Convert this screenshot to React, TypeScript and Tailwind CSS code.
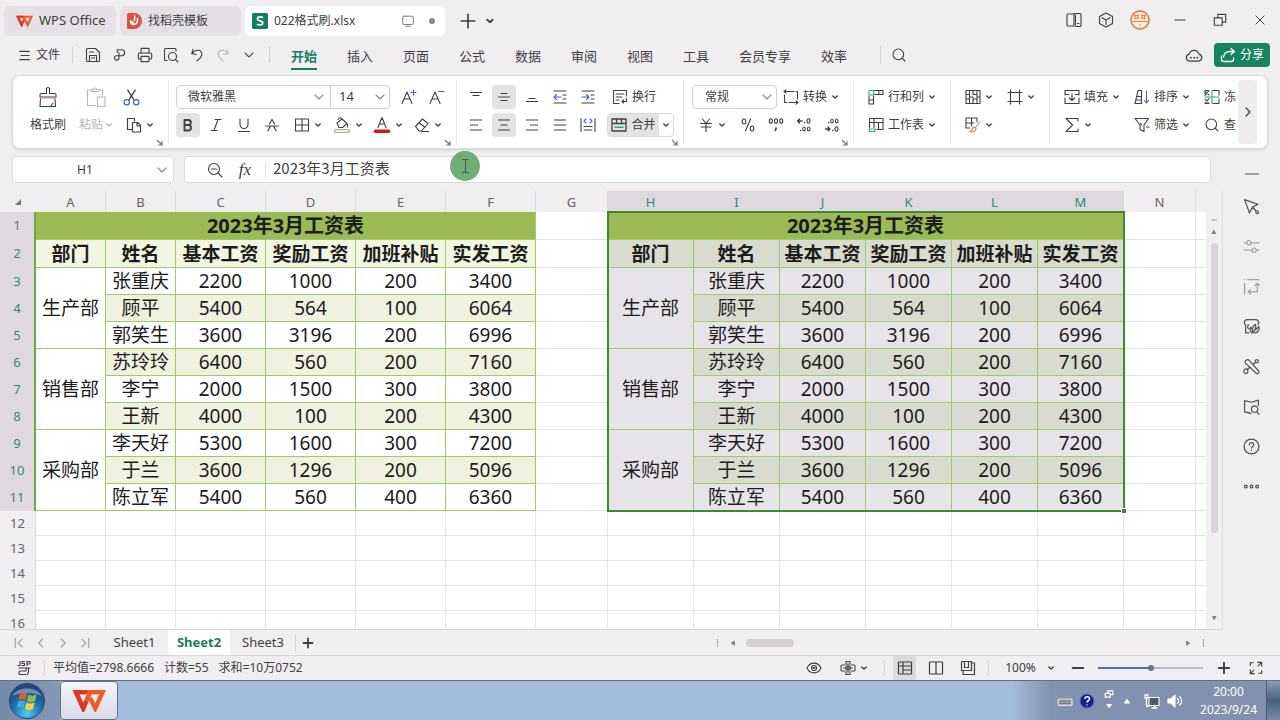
import type { ReactNode } from "react";
import { Printer, Search, X } from "lucide-react";

type Person = { name: string; base: number; bonus: number; extra: number; total: number };

const departments: { name: string; people: Person[] }[] = [
  {
    name: "生产部",
    people: [
      { name: "张重庆", base: 2200, bonus: 1000, extra: 200, total: 3400 },
      { name: "顾平", base: 5400, bonus: 564, extra: 100, total: 6064 },
      { name: "郭笑生", base: 3600, bonus: 3196, extra: 200, total: 6996 },
    ],
  },
  {
    name: "销售部",
    people: [
      { name: "苏玲玲", base: 6400, bonus: 560, extra: 200, total: 7160 },
      { name: "李宁", base: 2000, bonus: 1500, extra: 300, total: 3800 },
      { name: "王新", base: 4000, bonus: 100, extra: 200, total: 4300 },
    ],
  },
  {
    name: "采购部",
    people: [
      { name: "李天好", base: 5300, bonus: 1600, extra: 300, total: 7200 },
      { name: "于兰", base: 3600, bonus: 1296, extra: 200, total: 5096 },
      { name: "陈立军", base: 5400, bonus: 560, extra: 400, total: 6360 },
    ],
  },
];

const headings = ["部门", "姓名", "基本工资", "奖励工资", "加班补贴", "实发工资"];
const title = "2023年3月工资表";

const columns = [
  { id: "A", w: "w-[70px]" },
  { id: "B", w: "w-[70px]" },
  { id: "C", w: "w-[90px]" },
  { id: "D", w: "w-[90px]" },
  { id: "E", w: "w-[90px]" },
  { id: "F", w: "w-[90px]" },
  { id: "G", w: "w-[72px]" },
  { id: "H", w: "w-[86px]" },
  { id: "I", w: "w-[86px]" },
  { id: "J", w: "w-[86px]" },
  { id: "K", w: "w-[86px]" },
  { id: "L", w: "w-[86px]" },
  { id: "M", w: "w-[86px]" },
  { id: "N", w: "w-[72px]" },
];

const menus = ["开始", "插入", "页面", "公式", "数据", "审阅", "视图", "工具", "会员专享", "效率"];

/* ---------- icons ---------- */

const Icon = ({
  children,
  className = "size-4",
  box = "0 0 16 16",
}: {
  children: ReactNode;
  className?: string;
  box?: string;
}) => (
  <svg
    viewBox={box}
    className={`shrink-0 ${className}`}
    fill="none"
    stroke="currentColor"
    strokeWidth="1.1"
    strokeLinecap="round"
    strokeLinejoin="round"
    aria-hidden="true"
  >
    {children}
  </svg>
);

const Chevron = ({ className = "size-2" }: { className?: string }) => (
  <Icon box="0 0 8 8" className={className}>
    <path d="M1.8 3l2.2 2 2.2-2" strokeWidth="1.4" />
  </Icon>
);

const WideChevron = ({ className = "text-[#888]" }: { className?: string }) => (
  <Icon box="0 0 10 10" className={`size-2.5 ${className}`}>
    <path d="M1 3l4 4 4-4" strokeWidth="1.1" />
  </Icon>
);

const WpsLogo = ({ className }: { className: string }) => (
  <svg viewBox="0 0 32 22" className={className} fill="none" strokeWidth="4.2" aria-hidden="true">
    <path d="M15 3H3.500l7 15.500L17 3h12l-7 15.500-5-10" stroke="#ee5a2a" />
    <path d="M14 3H3.500l7 15.500 3-7" stroke="#da3a25" />
  </svg>
);

const Lines = ({ d }: { d: string }) => (
  <Icon>
    <path d={d} strokeWidth="1.2" strokeLinecap="butt" />
  </Icon>
);

/* ---------- ribbon pieces ---------- */

const Tool = ({
  label,
  children,
  active = false,
}: {
  label: string;
  children: ReactNode;
  active?: boolean;
}) => (
  <div className="flex w-7 shrink-0 justify-center">
    <button
      type="button"
      aria-label={label}
      className={`flex size-6 items-center justify-center rounded ${active ? "bg-[#e4e2e4]" : ""}`}
    >
      {children}
    </button>
  </div>
);

const DropTool = ({ label, children }: { label: string; children: ReactNode }) => (
  <button type="button" aria-label={label} className="flex h-6 w-10 shrink-0 items-center justify-center gap-1">
    {children}
    <Chevron />
  </button>
);

const LabelTool = ({
  icon,
  text,
  label,
  drop = true,
  className = "",
}: {
  icon: ReactNode;
  text?: string;
  label?: string;
  drop?: boolean;
  className?: string;
}) => (
  <button
    type="button"
    aria-label={label}
    className={`flex h-6 shrink-0 items-center gap-1 whitespace-nowrap ${className}`}
  >
    {icon}
    {text && <span>{text}</span>}
    {drop && <Chevron />}
  </button>
);

const Group = ({
  children,
  className = "",
  launcher = false,
}: {
  children: ReactNode;
  className?: string;
  launcher?: boolean;
}) => (
  <div className={`flex flex-col pt-[7px] ${className}`}>
    {children}
    {launcher && (
      <button type="button" aria-label="更多设置" className="mr-1 self-end text-[#777]">
        <Icon box="0 0 8 8" className="size-2">
          <path d="M1.5 1.5l4 4M6 2.5V6H2.5" strokeWidth="1.2" />
        </Icon>
      </button>
    )}
  </div>
);

const Row = ({ children, className = "" }: { children: ReactNode; className?: string }) => (
  <div className={`flex h-7 items-center ${className}`}>{children}</div>
);

const Divider = () => <div className="my-1 w-px shrink-0 bg-[#e6e3e6]" />;

const SmallDivider = ({ className = "" }: { className?: string }) => (
  <div className={`w-px shrink-0 bg-[#d3d0d3] ${className}`} />
);

/* ---------- title bar and menu ---------- */

const TitleBar = () => (
  <header className="flex h-10 shrink-0 items-start pt-1.5 pl-1">
    <div className="flex gap-1">
      <button type="button" className="flex h-[30px] w-28 items-center gap-1.5 rounded-md bg-[#e5e0e5] pl-3 text-[13px]">
        <WpsLogo className="h-3 w-[17px]" />
        WPS Office
      </button>
      <button type="button" className="flex h-[30px] w-[121px] items-center gap-1.5 rounded-md bg-[#e5e0e5] pl-1.5">
        <svg viewBox="0 0 16 16" className="size-4" aria-hidden="true">
          <path d="M2.500 0H8a8 8 0 0 1 0 16H2.500A1.500 1.500 0 0 1 1 14.500v-13A1.500 1.500 0 0 1 2.500 0z" fill="#e0504a" />
          <path d="M8.500 3c1 2 0 3.500-.3 4.500M11.500 5.500c.5 3-1 6-3.500 6S4.500 9.500 4.500 8c1.500.2 2.700 1.200 3.200 2.500" stroke="#fff" strokeWidth="1.500" fill="none" strokeLinecap="round" />
        </svg>
        找稻壳模板
      </button>
      <div className="flex h-[30px] w-[200px] items-center rounded-md bg-white pl-[7px]">
        <svg viewBox="0 0 16 16" className="mr-1.5 size-4" aria-hidden="true">
          <rect width="16" height="16" rx="1.500" fill="#11805f" />
          <path d="M10.800 4.800C10 3.600 5.400 3.400 5.400 5.900c0 2.400 5.400 1.500 5.400 4.100 0 2.600-5 2.300-5.700.8" stroke="#fff" strokeWidth="1.700" fill="none" />
        </svg>
        <span className="flex-1">022格式刷.xlsx</span>
        <Icon className="mr-3.5 size-3.5 text-[#777]">
          <rect x="2" y="2.500" width="12" height="9.500" rx="1.500" />
          <path d="M5.500 14h5" />
        </Icon>
        <span className="mr-2.5 size-1.5 rounded-full bg-[#8a878a]" />
      </div>
    </div>
    <div className="ml-3.5 flex h-[30px] items-center gap-2">
      <button type="button" aria-label="新建标签">
        <Icon className="size-[18px]">
          <path d="M8 2v12M2 8h12" strokeWidth="1.500" />
        </Icon>
      </button>
      <button type="button" aria-label="标签列表">
        <Chevron className="size-2.5" />
      </button>
    </div>
    <div className="ml-auto flex h-7 items-center">
      <button type="button" aria-label="分屏" className="flex w-8 justify-center">
        <Icon>
          <path d="M8 2H2a1 1 0 0 0-1 1v10a1 1 0 0 0 1 1h6zM8 1.500h6a1 1 0 0 1 1 1v11a1 1 0 0 1-1 1H9.500M9.500 3v10M11.500 11.500h1.500" />
        </Icon>
      </button>
      <button type="button" aria-label="应用" className="flex w-8 justify-center">
        <Icon>
          <path d="M8 1l6.500 3.500v7L8 15l-6.500-3.500v-7zM4 5.700L8 8l4-2.300M8 8v4.500" />
        </Icon>
      </button>
      <button type="button" aria-label="账号" className="flex w-9 justify-center">
        <svg viewBox="0 0 20 20" className="size-5" aria-hidden="true">
          <circle cx="10" cy="10" r="9" fill="#fbeee4" stroke="#e58a4c" strokeWidth="1.800" />
          <path d="M4 5.500h5M4 8h5M5 4.500v5M8 4.500v5M11 5.500h5M11 8h5M12 4.500v5M14.500 4.500v5M2 11.500h16M9 15h2" stroke="#e58a4c" strokeWidth="1.200" />
        </svg>
      </button>
      <button type="button" aria-label="最小化" className="ml-0.5 flex w-10 justify-center">
        <Icon className="size-3">
          <path d="M1 8h14" strokeWidth="1.500" />
        </Icon>
      </button>
      <button type="button" aria-label="还原" className="flex w-10 justify-center">
        <Icon className="size-3.5">
          <path d="M1.500 5.500h9V14h-9zM5.500 5V1.500h9v9H11" strokeWidth="1.300" />
        </Icon>
      </button>
      <button type="button" aria-label="关闭" className="flex w-10 justify-center">
        <X className="size-4" strokeWidth={1.5} />
      </button>
    </div>
  </header>
);

const MenuBar = () => (
  <nav className="flex h-[30px] shrink-0 items-center">
    <button type="button" className="ml-[19px] flex items-center gap-1.5">
      <Icon className="size-[11px]">
        <path d="M1 2h14M3 8h12M1 14h14" strokeWidth="1.500" />
      </Icon>
      文件
    </button>
    <SmallDivider className="mr-[7px] ml-3 h-4" />
    <div className="flex items-center">
      <button type="button" aria-label="保存" className="flex w-[26px] justify-center">
        <Icon>
          <path d="M1.500 2.500a1 1 0 0 1 1-1h8l4 4v8a1 1 0 0 1-1 1h-11a1 1 0 0 1-1-1zM4.500 14V8.500h7V14M4.500 5h4M6.500 11h3" />
        </Icon>
      </button>
      <button type="button" aria-label="输出为PDF" className="flex w-[26px] justify-center">
        <Icon className="size-3.5">
          <path d="M6 5V2h5a3.300 3.300 0 0 1 0 6.800H4.500A2.600 2.600 0 1 0 8 11.300V5.500" strokeWidth="1.300" />
        </Icon>
      </button>
      <button type="button" aria-label="打印" className="flex w-[26px] justify-center">
        <Printer className="size-4" strokeWidth={1.7} />
      </button>
      <button type="button" aria-label="打印预览" className="flex w-[26px] justify-center">
        <Icon>
          <path d="M4 13.500H2.500a1 1 0 0 1-1-1v-10a1 1 0 0 1 1-1H12a1 1 0 0 1 1 1V4M12.500 12.500l2.500 2.500" />
          <circle cx="9.500" cy="9.500" r="4" />
        </Icon>
      </button>
      <button type="button" aria-label="撤销" className="flex w-[26px] justify-center">
        <Icon className="size-3.5">
          <path d="M3.500 1.500L2 6.500l5 1M2.300 6.400C6 1 13.500 1.500 13.500 7c0 3.500-3 5.500-5.500 7.500" strokeWidth="1.300" />
        </Icon>
      </button>
      <button type="button" aria-label="恢复" className="flex w-[26px] justify-center text-[#bbb]">
        <Icon className="size-3.5">
          <path d="M12.500 1.500L14 6.500l-5 1M13.700 6.400C10 1 2.500 1.500 2.500 7c0 3.500 3 5.500 5.500 7.500" strokeWidth="1.300" />
        </Icon>
      </button>
      <button type="button" aria-label="更多" className="flex w-[26px] justify-center">
        <WideChevron className="text-[#555]" />
      </button>
    </div>
    <SmallDivider className="mr-1.5 ml-[7px] h-4" />
    <div className="flex self-stretch text-[13px]">
      {menus.map((menu, i) => (
        <button
          key={menu}
          type="button"
          className={`flex flex-col items-center justify-end whitespace-nowrap ${
            menu.length > 2 ? "w-[82px]" : "w-14"
          } ${i === 0 ? "font-bold text-[#1c7d63]" : ""}`}
        >
          <span className="leading-5">{menu}</span>
          <span className={`mt-0.5 h-0.5 w-[26px] ${i === 0 ? "bg-[#1c7d63]" : ""}`} />
        </button>
      ))}
    </div>
    <SmallDivider className="ml-[18px] h-[18px]" />
    <button type="button" aria-label="搜索" className="ml-2.5">
      <Search className="size-4" strokeWidth={1.6} />
    </button>
    <div className="mr-2.5 ml-auto flex items-center gap-[11px]">
      <button type="button" aria-label="云同步">
        <Icon className="size-[18px]">
          <path d="M4 13.500a3.200 3.200 0 0 1-.3-6.300 4.500 4.500 0 0 1 8.700 0 3.200 3.200 0 0 1-.4 6.300z" />
          <path d="M5 10.500h.5M8 10.500h.5M10.700 10.500h.5" strokeWidth="1.400" />
        </Icon>
      </button>
      <button type="button" className="flex h-6 w-14 items-center justify-center gap-1 rounded bg-[#15845f] text-white">
        <Icon>
          <path d="M1.500 9v3.500a2 2 0 0 0 2 2h8a2 2 0 0 0 2-2V11M3.500 10c.5-3.500 3-5.500 6.500-5.500h4M11 1.500l3.500 3-3.500 3" strokeWidth="1.300" />
        </Icon>
        分享
      </button>
    </div>
  </nav>
);

/* ---------- ribbon ---------- */

const Ribbon = () => (
  <section className="mx-3 mt-[5px] flex h-[74px] shrink-0 rounded-lg border border-[#dedbde] bg-white shadow-sm">
    <Group className="w-[155px]" launcher>
      <div className="flex h-14 pl-[11px]">
        <button type="button" className="flex w-12 flex-col items-center">
          <span className="flex h-7 items-center">
            <Icon className="size-[22px]" box="0 0 22 22">
              <path d="M9.500 7.500V3a1.500 1.500 0 0 1 3 0v4.500h5.500a1 1 0 0 1 1 1V11H3V8.500a1 1 0 0 1 1-1zM3.500 12.500L3 20.500h15.500l-.5-8M14 20l2-3" />
              <path d="M3.500 12h15" stroke="#e08a5a" />
            </Icon>
          </span>
          <span className="leading-7">格式刷</span>
        </button>
        <button type="button" className="flex w-12 flex-col items-center text-[#b9b6b9]">
          <span className="flex h-7 items-center">
            <Icon className="size-[22px]" box="0 0 22 22">
              <path d="M6 4H2.500v15.500H10M14 4h3.500v5M6.500 5.500v-2h2c0-2 3-2 3 0h2v2zM12.500 11H20v9.500h-7.500z" />
            </Icon>
          </span>
          <span className="flex items-center gap-0.5 leading-7">
            粘贴
            <Chevron />
          </span>
        </button>
        <div className="flex flex-col">
          <Row>
            <button type="button" aria-label="剪切" className="ml-[3px]">
              <Icon className="size-[17px]">
                <path d="M4.500 1L10.500 10.500M11.500 1L5.500 10.500" strokeWidth="1.200" />
                <circle cx="3.500" cy="12.500" r="2.500" stroke="#3d68b8" />
                <circle cx="12.500" cy="12.500" r="2.500" stroke="#3d68b8" />
              </Icon>
            </button>
          </Row>
          <Row>
            <DropTool label="复制">
              <Icon>
                <path d="M5.500 12.500H1.500v-11h7V4M6.500 5.500h5l3 3v6.500h-8zM11 5.500V9h3.500" strokeWidth="1.200" />
              </Icon>
            </DropTool>
          </Row>
        </div>
      </div>
    </Group>
    <Divider />

    <Group className="w-[287px]" launcher>
      <Row className="pl-[7px]">
        <div className="flex h-6 w-[214px] items-center rounded border border-[#d4d1d4]">
          <label className="flex h-full flex-1 items-center pr-1.5">
            <select aria-label="字体" className="h-full min-w-0 flex-1 appearance-none pl-[11px] outline-none">
              <option>微软雅黑</option>
            </select>
            <WideChevron />
          </label>
          <label className="flex h-full w-[59px] items-center border-l border-[#d4d1d4] pr-1">
            <select aria-label="字号" className="h-full min-w-0 flex-1 appearance-none pl-2 text-[13px] outline-none">
              <option>14</option>
            </select>
            <WideChevron />
          </label>
        </div>
        <div className="ml-[5px] flex">
          <Tool label="增大字号">
            <Icon className="size-[18px]" box="0 0 18 18">
              <path d="M2 15.500L7 4l5 11.500M4 11h6" />
              <path d="M13.500 2v5M11 4.500h5" stroke="#3d68b8" />
            </Icon>
          </Tool>
          <Tool label="减小字号">
            <Icon className="size-[18px]" box="0 0 18 18">
              <path d="M2 15.500L7 4l5 11.500M4 11h6" />
              <path d="M10.500 3.500H16" stroke="#3d68b8" />
            </Icon>
          </Tool>
        </div>
      </Row>
      <Row className="pl-[5px]">
        <Tool label="加粗" active>
          <Icon>
            <path d="M4.500 3v10.500h4.200a2.800 2.800 0 0 0 0-5.500H4.500M4.500 3h3.800a2.500 2.500 0 0 1 0 5" strokeWidth="1.900" />
          </Icon>
        </Tool>
        <Tool label="倾斜">
          <Icon>
            <path d="M7 2.500h6M3 13.500h6M10 2.500L6 13.500" />
          </Icon>
        </Tool>
        <Tool label="下划线">
          <Icon>
            <path d="M4 2v5.500a4 4 0 0 0 8 0V2M2.500 14.500h11" />
          </Icon>
        </Tool>
        <Tool label="删除线">
          <Icon>
            <path d="M4 14l2-4.500M12 14l-2-4.500M5.500 7L8 2.500 10.500 7M1.500 9h13" />
          </Icon>
        </Tool>
        <div className="ml-0.5 flex">
          <DropTool label="边框">
            <Icon>
              <path d="M1.500 2h13v12h-13zM8 2v12M1.500 8h13" />
            </Icon>
          </DropTool>
          <DropTool label="填充颜色">
            <Icon className="size-[18px]" box="0 0 18 18">
              <path d="M4 7l5-4 5 4.500-4.500 4H6zM5 3.500c1-2.500 4-2 4.500 0M14.500 8v3" />
              <rect x="1.500" y="13.500" width="15" height="3" rx="1.500" stroke="#a9ac98" fill="#f1f2df" />
            </Icon>
          </DropTool>
          <DropTool label="字体颜色">
            <Icon className="size-[18px]" box="0 0 18 18">
              <path d="M5 11.500L9 1.500l4 10M6.500 8h5" />
              <path d="M2.500 15.300h13" stroke="#d31818" strokeWidth="3.500" />
            </Icon>
          </DropTool>
          <DropTool label="清除">
            <Icon>
              <path d="M1.500 9.500L8.500 2l5.500 4.500-6.500 7.500H5zM5 5.500l6 5M8 14.500h6.500" />
            </Icon>
          </DropTool>
        </div>
      </Row>
    </Group>
    <Divider />

    <Group className="w-[226px]" launcher>
      <Row className="pl-[5px]">
        <Tool label="顶端对齐"><Lines d="M2 3.500h12M4.500 6.500h7" /></Tool>
        <Tool label="垂直居中" active><Lines d="M4.500 4.500h7M2 8h12M4.500 11.500h7" /></Tool>
        <Tool label="底端对齐"><Lines d="M4.500 9.500h7M2 12.500h12" /></Tool>
        <Tool label="减少缩进">
          <Icon>
            <path d="M2 2h12M11 6h3M11 10h3M2 14h12" strokeWidth="1.200" />
            <path d="M9 8H2M4.500 5.500L2 8l2.500 2.500" stroke="#3d68b8" />
          </Icon>
        </Tool>
        <Tool label="增加缩进">
          <Icon>
            <path d="M2 2h12M11 6h3M11 10h3M2 14h12" strokeWidth="1.200" />
            <path d="M2 8h7M6.500 5.500L9 8l-2.500 2.500" stroke="#3d68b8" />
          </Icon>
        </Tool>
        <LabelTool
          drop={false}
          text="换行"
          className="ml-2.5"
          icon={
            <Icon>
              <path d="M7 14.500H1.500v-13h13V7M4 5h8M4 8h6M4 11h3M14.500 9.500v3h-4M11.500 11L10 12.500l1.500 1.500" />
            </Icon>
          }
        />
      </Row>
      <Row className="pl-[5px]">
        <Tool label="左对齐"><Lines d="M2 3h12M2 8h8M2 13h12" /></Tool>
        <Tool label="水平居中" active><Lines d="M2 3h12M4.500 8h7M2 13h12" /></Tool>
        <Tool label="右对齐"><Lines d="M2 3h12M6 8h8M2 13h12" /></Tool>
        <Tool label="两端对齐"><Lines d="M2 3h12M2 8h12M2 13h12" /></Tool>
        <Tool label="分散对齐">
          <Icon>
            <path d="M1 1.500v13M15 1.500v13M4 9.500h8M4 13h8" />
            <path d="M6 2L4 4l2 2M10 2l2 2-2 2" stroke="#3d68b8" />
          </Icon>
        </Tool>
        <div className="ml-[5px] flex h-6 rounded border border-[#dcd9dc]">
          <button type="button" className="flex w-[51px] items-center justify-center gap-1 whitespace-nowrap bg-[#e4e2e4]">
            <Icon>
              <path d="M1 2h14v12H1zM1 6.500h14M5.500 2v4.500M10.500 2v4.500" strokeWidth="1.300" />
              <path d="M4 10.300h8" stroke="#3fa58a" strokeWidth="1.600" />
            </Icon>
            合并
          </button>
          <button type="button" aria-label="合并选项" className="flex w-3.5 items-center justify-center">
            <Chevron />
          </button>
        </div>
      </Row>
    </Group>
    <Divider />

    <Group className="w-[169px]" launcher>
      <Row className="pl-2">
        <label className="flex h-6 w-[85px] items-center rounded border border-[#d4d1d4] pr-1">
          <select aria-label="数字格式" className="h-full min-w-0 flex-1 appearance-none pl-3 outline-none">
            <option>常规</option>
          </select>
          <WideChevron />
        </label>
        <LabelTool
          text="转换"
          className="ml-1.5"
          icon={
            <Icon>
              <path d="M1.500 6v7.500H4M6 13.500h9M1 2.500h10M3 .8L1 2.500l2 1.700M14.500 10V2.500H13M13 11.800l2 1.700-2 1.700" />
            </Icon>
          }
        />
      </Row>
      <Row className="pl-2">
        <DropTool label="货币">
          <Icon>
            <path d="M4.500 2L8 6.500 11.500 2M2.500 6.500h11M3 10h10M8 6.500v8" />
          </Icon>
        </DropTool>
        <div className="ml-0.5 flex">
          <Tool label="百分比">
            <Icon>
              <ellipse cx="4" cy="4.500" rx="1.800" ry="2.500" />
              <ellipse cx="12" cy="11.500" rx="1.800" ry="2.500" />
              <path d="M10.500 2L5.500 14" />
            </Icon>
          </Tool>
          <Tool label="千位分隔">
            <Icon>
              <ellipse cx="2.800" cy="4" rx="1.500" ry="2.300" />
              <ellipse cx="8" cy="4" rx="1.500" ry="2.300" />
              <ellipse cx="13.200" cy="4" rx="1.500" ry="2.300" />
              <path d="M8 11v1l-.8 1.500" strokeWidth="1.600" />
            </Icon>
          </Tool>
          <Tool label="增加小数位">
            <Icon>
              <path d="M6 4H1.500M3.500 2l-2 2 2 2M8.500 5.500h.3M4.500 13.500h.3" strokeWidth="1.300" />
              <ellipse cx="12.500" cy="4" rx="1.500" ry="2.200" />
              <ellipse cx="8" cy="12" rx="1.300" ry="2" />
              <ellipse cx="12.700" cy="12" rx="1.300" ry="2" />
            </Icon>
          </Tool>
          <Tool label="减少小数位">
            <Icon>
              <path d="M1.500 12H6M4 10l2 2-2 2M8.500 13.500h.3M4.500 5.500h.3" strokeWidth="1.300" />
              <ellipse cx="12.500" cy="12" rx="1.500" ry="2.200" />
              <ellipse cx="8" cy="4" rx="1.300" ry="2" />
              <ellipse cx="12.700" cy="4" rx="1.300" ry="2" />
            </Icon>
          </Tool>
        </div>
      </Row>
    </Group>
    <Divider />

    <Group className="w-24 pl-3.5">
      <Row>
        <LabelTool
          text="行和列"
          icon={
            <Icon>
              <path d="M6.500 1.500H15v4H6.500M10.800 1.500v4M1 7v8h4.500V7M1 11h4.500" />
              <path d="M1 1.500h4.700V6H1z" stroke="#3fa58a" />
            </Icon>
          }
        />
      </Row>
      <Row>
        <LabelTool
          text="工作表"
          icon={
            <Icon>
              <path d="M1.500 10.500V1.500H15v11H9M1.500 5.500H15M6 1.500v9M10.500 5.500v7" />
              <path d="M1.500 12h6l-1 2.500h-5z" stroke="#3fa58a" />
            </Icon>
          }
        />
      </Row>
    </Group>
    <Divider />

    <Group className="w-[98px] pl-3.5">
      <Row className="gap-3.5">
        <LabelTool
          label="填充样式"
          icon={
            <Icon>
              <path d="M1 1.500h14M1 14.500h14M1 1.500v13M1 5.500h3M1 10h3M4.500 1.500v13M8 1.500v4h4v-4M4.500 8H8v6.500M8 10h4v4.500M12 5.500v5M15 1.500v13M12 8h3" />
            </Icon>
          }
        />
        <LabelTool
          label="单元格"
          icon={
            <Icon>
              <path d="M3.500 1v14M12.500 1v14M1 3.500h14M1 12.500h14" />
            </Icon>
          }
        />
      </Row>
      <Row>
        <LabelTool
          label="条件格式"
          icon={
            <Icon>
              <path d="M5 11H1V1h11v4M1 6h8M6.500 1v8" />
              <path d="M15 5l-5 6M10 10.500c-2-.5-3 1-3 2.500l-2 1.500c2.500.8 6 .3 6-3z" stroke="#d98a4a" />
            </Icon>
          }
        />
      </Row>
    </Group>
    <Divider />

    <Group className="min-w-0 flex-1 overflow-hidden pl-3.5">
      <Row>
        <LabelTool
          text="填充"
          className="w-[70px]"
          icon={
            <Icon>
              <path d="M1 6V1.500h14V6M1 9v5.500h14V9M1 5.500h4M11 5.500h4M8 5v6.500M5.500 9L8 11.500 10.500 9" />
            </Icon>
          }
        />
        <LabelTool
          text="排序"
          className="w-[70px]"
          icon={
            <Icon>
              <path d="M1 14.500L4 1.500h3.500v13zM3 7.500h4.500M2.500 11h5" />
              <path d="M12.500 2v12M10.500 11.500l2 2.500 2-2.500" stroke="#3d68b8" />
            </Icon>
          }
        />
        <LabelTool
          drop={false}
          label="冻结"
          text="冻"
          icon={
            <Icon>
              <path d="M1 1.500h3M9 1.500h6V6M1 1.500V5M5 1.500l-4 5M5 6L1.500 3M9 14.500h6V10M1 14.500l4-5M1 10l4 4.500M1 14.500h3" />
              <path d="M1 8h14M8 1.500v13" stroke="#3fa58a" />
            </Icon>
          }
        />
      </Row>
      <Row>
        <LabelTool
          label="求和"
          className="w-[70px]"
          icon={
            <Icon>
              <path d="M14 4V1.500H2L8.500 8 2 14.500h12V12" />
            </Icon>
          }
        />
        <LabelTool
          text="筛选"
          className="w-[70px]"
          icon={
            <Icon>
              <path d="M1 1.500h13.500L10 8v6.500L6 12.500V8zM7.500 8l-1-1.500M12.500 10h2.500" />
            </Icon>
          }
        />
        <LabelTool drop={false} label="查找" text="查" icon={<Search className="size-4" strokeWidth={1.6} />} />
      </Row>
    </Group>
    <button type="button" aria-label="展开功能区" className="my-1 mr-2.5 flex w-[19px] shrink-0 items-center justify-center rounded bg-[#efedef]">
      <Icon box="0 0 10 10" className="size-2.5">
        <path d="M3 1l4 4-4 4" strokeWidth="1.300" />
      </Icon>
    </button>
  </section>
);

/* ---------- formula bar and grid ---------- */

const FormulaBar = () => (
  <div className="mt-[7px] mr-3 mb-2 ml-3 flex h-[27px] shrink-0 gap-2.5">
    <div className="flex w-[162px] items-center rounded border border-[#dedbde] bg-white pr-1.5">
      <input aria-label="名称框" defaultValue="H1" className="min-w-0 flex-1 text-center outline-none" />
      <button type="button" aria-label="名称列表">
        <WideChevron />
      </button>
    </div>
    <div className="relative flex flex-1 items-center rounded border border-[#dedbde] bg-white">
      <button type="button" aria-label="浏览公式" className="ml-[22px]">
        <Icon>
          <circle cx="7" cy="7" r="5.500" />
          <path d="M4.500 7h5M11 11l4 4" />
        </Icon>
      </button>
      <button type="button" aria-label="插入函数" className="ml-3 w-5 font-[Liberation_Serif,serif] text-[17px] leading-5 italic">
        fx
      </button>
      <SmallDivider className="ml-2.5 h-4 bg-[#e3e0e3]" />
      <input
        aria-label="编辑栏"
        defaultValue={title}
        className="ml-[7px] flex-1 pb-1 font-['Noto_Sans_CJK_SC',sans-serif] text-[15px] outline-none"
      />
      <div className="absolute -top-1.5 left-[265px] flex size-[30px] items-center justify-center rounded-full bg-[#6fae77] text-[#47624b]">
        <Icon>
          <path d="M5.500 1.500h6M5.500 14.500h6M8.500 1.500v13" />
        </Icon>
      </div>
    </div>
  </div>
);

const DataBlock = ({ row, selected = false }: { row: number; selected?: boolean }) => {
  const edge = "border-r border-b border-[#9acb6c] p-0 text-center align-middle whitespace-nowrap overflow-hidden";
  if (row === 1) {
    return (
      <td colSpan={6} className={`${edge} bg-[#9bb955] text-[20px] leading-6 font-bold`}>
        {title}
      </td>
    );
  }
  if (row === 2) {
    return (
      <>
        {headings.map((h) => (
          <td key={h} className={`${edge} font-bold ${selected ? "bg-[#d9dbd0]" : "bg-[#f1f5e1]"}`}>
            {h}
          </td>
        ))}
      </>
    );
  }
  const dept = departments[Math.floor((row - 3) / 3)];
  const pos = (row - 3) % 3;
  const person = dept.people[pos];
  const plain = selected ? "bg-[#e7e4e9]" : "bg-white";
  const banded = selected ? "bg-[#d9dbd0]" : "bg-[#f0f2df]";
  const fill = row % 2 === 0 ? banded : plain;
  return (
    <>
      {pos === 0 && (
        <td rowSpan={3} className={`${edge} ${plain}`}>
          {dept.name}
        </td>
      )}
      {[person.name, person.base, person.bonus, person.extra, person.total].map((value, i) => (
        <td key={i} className={`${edge} ${fill}`}>
          {value}
        </td>
      ))}
    </>
  );
};

const rowHeight = (row: number) => (row < 3 ? "h-7" : row < 12 ? "h-[27px]" : "h-[25px]");

const Sheet = () => (
  <div className="flex min-h-0 flex-1 overflow-hidden border-b border-[#d9d6d9]">
    <div className="relative min-w-0 flex-1">
      <table className="w-full table-fixed border-separate border-spacing-0 text-[19px] leading-6 text-[#1c1c1c]">
        <colgroup>
          <col className="w-9" />
          {columns.map((c) => (
            <col key={c.id} className={c.w} />
          ))}
          <col />
        </colgroup>
        <thead className="text-[13px] leading-5 text-[#666]">
          <tr className="h-[21px]">
            <th className="p-0">
              <Icon box="0 0 8 8" className="mr-3.5 ml-auto size-2 text-[#777]">
                <path d="M7 1v6H1z" fill="currentColor" stroke="none" />
              </Icon>
            </th>
            {columns.map((c) => {
              const picked = c.id >= "H" && c.id <= "M";
              return (
                <th
                  key={c.id}
                  className={`border-r border-[#dcd9dc] p-0 font-normal ${picked ? "bg-[#dfd9df] text-[#2f8a70]" : ""}`}
                >
                  {c.id}
                </th>
              );
            })}
            <th className="p-0" />
          </tr>
        </thead>
        <tbody>
          {Array.from({ length: 16 }, (_, i) => i + 1).map((row) => {
            const filled = row < 12;
            const blank = "border-r border-b border-[#e6e3e6] bg-white p-0";
            return (
              <tr key={row} className={rowHeight(row)}>
                <th
                  className={`p-0 pb-0.5 text-[13px] leading-5 font-normal ${
                    filled
                      ? "border-r-2 border-[#6fa544] bg-[#dfd9df] text-[#2f8a70]"
                      : "border-r border-[#dcd9dc] text-[#666]"
                  }`}
                >
                  {row}
                </th>
                {filled ? (
                  <>
                    <DataBlock row={row} />
                    <td className={blank} />
                    <DataBlock row={row} selected />
                    <td className={blank} />
                  </>
                ) : (
                  columns.map((c) => <td key={c.id} className={blank} />)
                )}
                <td className="border-b border-[#e6e3e6] bg-white p-0" />
              </tr>
            );
          })}
        </tbody>
      </table>
      {/* selected range H1:M11 */}
      <div className="pointer-events-none absolute top-5 left-[607px] flex h-[301px] w-[518px] items-end justify-end border-2 border-[#3f8a2c]">
        <span className="-mr-1 -mb-1 size-1.5 shrink-0 border border-white bg-[#3f8a2c]" />
      </div>
    </div>
    <div className="flex w-[17px] shrink-0 flex-col items-center border-r border-[#e0dde0] pt-7 pb-2 text-[#777]">
      <span className="h-0.5 w-1.5 bg-[#c9c6c9]" />
      <button type="button" aria-label="向上滚动" className="mt-2">
        <Icon box="0 0 8 8" className="size-1.5">
          <path d="M4 2l2 4H2z" fill="currentColor" />
        </Icon>
      </button>
      <span className="mt-2 h-[290px] w-[7px] rounded-full bg-[#d9d2db]" />
      <button type="button" aria-label="向下滚动" className="mt-auto">
        <Icon box="0 0 8 8" className="size-1.5">
          <path d="M4 6L2 2h4z" fill="currentColor" />
        </Icon>
      </button>
    </div>
  </div>
);

const SheetTabs = () => (
  <div className="flex h-[26px] shrink-0 items-center border-b border-[#d9d6d9] text-[13px]">
    <div className="ml-2 flex text-[#aaa7aa]">
      {[
        { label: "第一个", d: "M3 2v12M12 3L7 8l5 5" },
        { label: "上一个", d: "M10 3L5 8l5 5" },
        { label: "下一个", d: "M6 3l5 5-5 5" },
        { label: "最后一个", d: "M13 2v12M4 3l5 5-5 5" },
      ].map((b) => (
        <button key={b.label} type="button" aria-label={b.label} className="flex w-[22px] justify-center">
          <Icon className="size-3">
            <path d={b.d} strokeWidth="1.800" />
          </Icon>
        </button>
      ))}
    </div>
    <button type="button" className="ml-2 h-full w-[61px]">Sheet1</button>
    <button type="button" className="ml-[3px] h-full w-[62px] rounded-b bg-white font-bold text-[#1c7d63]">Sheet2</button>
    <button type="button" className="ml-px h-full w-16">Sheet3</button>
    <SmallDivider className="h-4" />
    <button type="button" aria-label="新建工作表" className="ml-1.5">
      <Icon className="size-3">
        <path d="M8 2v12M2 8h12" strokeWidth="2.400" />
      </Icon>
    </button>
    <div className="mr-[19px] ml-auto flex w-[487px] items-center text-[#777]">
      <span className="h-2 w-px bg-[#aaa]" />
      <button type="button" aria-label="向左滚动" className="ml-3">
        <Icon box="0 0 8 8" className="size-1.5">
          <path d="M2 4l4-2.500v5z" fill="currentColor" />
        </Icon>
      </button>
      <span className="ml-2.5 h-2 w-12 rounded-full bg-[#d6cfd6]" />
      <button type="button" aria-label="向右滚动" className="ml-auto">
        <Icon box="0 0 8 8" className="size-1.5">
          <path d="M6 4L2 1.500v5z" fill="currentColor" />
        </Icon>
      </button>
      <span className="ml-3 h-2 w-px bg-[#aaa]" />
    </div>
  </div>
);

const sideTools = [
  { label: "选择", d: "M1.500 1.500L14 6 9 8.500 6 14zM9 8.500l3.500 4M12 13.500a1.300 1.300 0 1 0 2.600 0 1.300 1.300 0 1 0-2.600 0" },
  { label: "属性", muted: true, d: "M1 4.500h2.500M7.500 4.500H15M1 11.500h7.500M12.500 11.500H15M3.500 4.500a2 2 0 1 0 4 0 2 2 0 1 0-4 0M8.500 11.500a2 2 0 1 0 4 0 2 2 0 1 0-4 0" },
  { label: "透视", muted: true, d: "M1.500 5v10M1.500 1.500h.1M4.500 1.500H15M13.500 5.500V13H5M11.500 7l2-2 2 2M7 11l-2 2 2 2" },
  { label: "图表", d: "M5.500 14H2.500V6.500C.5 5.500 1 1.500 4 1.500h8c3 0 3.500 3.500 2 4.500M5.500 6.500c-1.500 0-1.500 3.500 0 3.500M8.500 14c-2.500-1-2-4-1-5.500l1.500 3M9.500 14c-1.500-3 0-6.500 2-8 1 2 .500 5-2 8M11 14c3.500 0 4.500-3 4-6l-3 3" },
  { label: "工具", d: "M2 4a2.200 2.200 0 0 1 4-1.500L14.500 12a1.500 1.500 0 0 1-2.300 2.200L3.500 6A2.200 2.200 0 0 1 2 4M14.500 3a1.500 1.500 0 1 1-3 0 1.500 1.500 0 1 1 3 0M4.500 12.500a1.800 1.800 0 1 1-3.500 0 1.800 1.800 0 1 1 3.500 0M4 11l2-2M10 5.500L12 4" },
  { label: "查阅", d: "M6.500 14L1.500 13V2.500L8 4l6.500-2V7M1.500 13l6 1.500M14 10.500a3 3 0 1 1-6 0 3 3 0 1 1 6 0M13 13l2 2.500" },
  { label: "帮助", d: "M15 8A7 7 0 1 1 1 8a7 7 0 1 1 14 0M6 6.500c0-3 4-2.500 4-.2C10 8 8 8 8 9.500M8 11.500v.2" },
  { label: "更多", d: "M4 8a1.300 1.300 0 1 1-2.600 0A1.300 1.300 0 1 1 4 8M9.300 8a1.300 1.300 0 1 1-2.600 0 1.300 1.300 0 1 1 2.600 0M14.600 8A1.300 1.300 0 1 1 12 8a1.300 1.300 0 1 1 2.600 0" },
];

const SideBar = () => (
  <aside className="flex w-[57px] shrink-0 flex-col items-center border-b border-[#d9d6d9] pt-[13px]">
    <button type="button" aria-label="收起侧栏" className="flex h-6 items-center text-[#888]">
      <Icon>
        <path d="M1.500 8h13" strokeWidth="1.500" />
      </Icon>
    </button>
    {sideTools.map((t) => (
      <button
        key={t.label}
        type="button"
        aria-label={t.label}
        className={`flex h-10 items-center ${t.muted ? "text-[#a5a2a5]" : "text-[#555]"}`}
      >
        <Icon className="size-[17px]">
          <path d={t.d} strokeWidth="1.200" />
        </Icon>
      </button>
    ))}
  </aside>
);

const StatusBar = () => (
  <footer className="flex h-6 shrink-0 items-center pr-[17px]">
    <button type="button" aria-label="宏" className="ml-4">
      <Icon>
        <path d="M4 1.500v4H2M8.500 1.500H6v2h2.500v2H6M11 5.500v-4h3v2.500h-3M3 8h7v3H4.500a1.500 1.500 0 0 0 0 3.500H10M10 8h4M12.500 8v3.500l-1 3" />
      </Icon>
    </button>
    <SmallDivider className="mr-2 ml-3 h-4" />
    <div className="flex gap-2.5">
      <span>平均值=2798.6666</span>
      <span>计数=55</span>
      <span>求和=10万0752</span>
    </div>
    <div className="ml-auto flex items-center">
      <button type="button" aria-label="护眼模式">
        <Icon>
          <path d="M1 8c3-6.500 11-6.500 14 0-3 6.500-11 6.500-14 0z" />
          <circle cx="8" cy="8" r="2.500" />
          <path d="M7 7.500l1 1 1-1" />
        </Icon>
      </button>
      <button type="button" aria-label="阅读模式" className="ml-[18px] flex items-center gap-1">
        <Icon>
          <path d="M6 4.500V1.500h4v3M6 11.500v3h4v-3M4.500 5H2a1 1 0 0 0-1 1v4a1 1 0 0 0 1 1h2.500M11.500 5H14a1 1 0 0 1 1 1v4a1 1 0 0 1-1 1h-2.500M3.500 8h9M8 3.500v9M6 6h4v4H6z" />
        </Icon>
        <Chevron />
      </button>
      <SmallDivider className="ml-4 h-4" />
      <button type="button" aria-label="普通视图" className="ml-2 flex h-6 w-[23px] items-center justify-center bg-[#dcd9dc]">
        <Icon>
          <path d="M1.500 2h13v12h-13zM6 2v12M1.500 6h13M6 10h8.500" strokeWidth="1.200" />
        </Icon>
      </button>
      <button type="button" aria-label="分页预览" className="ml-3">
        <Icon>
          <path d="M1.500 2h13v12h-13zM8 2v12" strokeWidth="1.200" />
        </Icon>
      </button>
      <button type="button" aria-label="页面布局" className="ml-4">
        <Icon>
          <path d="M1.500 1.500h10v9h-10zM4.500 1.500v6h4v-6M11.500 3h3v11.500H3v-4" strokeWidth="1.200" />
        </Icon>
      </button>
      <SmallDivider className="ml-3 h-4" />
      <button type="button" className="ml-[15px] flex items-center gap-2.5">
        <span className="w-[33px]">100%</span>
        <Chevron />
      </button>
      <button type="button" aria-label="缩小" className="ml-4">
        <Icon className="size-3.5">
          <path d="M2 8h12" strokeWidth="2.200" />
        </Icon>
      </button>
      <input
        type="range"
        aria-label="显示比例"
        defaultValue={50}
        className="ml-[13px] h-0.5 w-[105px] appearance-none bg-[linear-gradient(to_right,#4b74ab_50%,#bdbabd_50%)] [&::-webkit-slider-thumb]:size-1.5 [&::-webkit-slider-thumb]:appearance-none [&::-webkit-slider-thumb]:rounded-full [&::-webkit-slider-thumb]:bg-[#5f7694]"
      />
      <button type="button" aria-label="放大" className="ml-3.5">
        <Icon className="size-3.5">
          <path d="M8 2v12M2 8h12" strokeWidth="2.200" />
        </Icon>
      </button>
      <button type="button" aria-label="全屏" className="ml-[18px]">
        <Icon className="size-3.5">
          <path d="M1.500 5V2H5M10 1.500h4.500V6M14.500 1.500l-4 4M14.500 11v3H11M6 14.500H1.500V10M1.500 14.500l4-4" strokeWidth="1.300" />
        </Icon>
      </button>
    </div>
  </footer>
);

const TaskBar = () => (
  <div className="flex h-10 shrink-0 border-t border-[#5d6f8d] bg-[#a3bedd] text-white">
    <button type="button" aria-label="开始菜单" className="flex w-[60px] items-center bg-linear-to-r from-[#7389aa] to-[#8599b6] pl-[9px]">
      <svg viewBox="0 0 36 36" className="size-9" aria-hidden="true">
        <defs>
          <radialGradient id="orb" cx="50%" cy="85%" r="75%">
            <stop offset="0" stopColor="#4fd0f0" />
            <stop offset="0.55" stopColor="#1f6fae" />
            <stop offset="1" stopColor="#23497a" />
          </radialGradient>
        </defs>
        <circle cx="18" cy="18" r="17.500" fill="url(#orb)" stroke="#2b4468" />
        <path d="M3.500 13C7 3 29 3 32.500 13c-6-4-23-4-29 0z" fill="#fff" opacity=".35" />
        <path d="M11 10.500c2.500-1.500 5-1.500 7 0L16.500 17c-2.500-1.500-4.500-1.500-7 0z" fill="#ea5b2c" />
        <path d="M19.500 11.500c2.500 1.500 5 1.500 8 0L26 18c-3 1.500-5.500 1.500-8 0z" fill="#8cc344" />
        <path d="M9 18.500c2.500-1.500 5-1.500 7 0L14.500 25c-2.500-1.500-4.500-1.500-7 0z" fill="#3fa9e8" />
        <path d="M17.500 19.500c2.500 1.500 5 1.500 8 0L24 26c-3 1.500-5.500 1.500-8 0z" fill="#fbd23c" />
      </svg>
    </button>
    <button type="button" aria-label="WPS 表格" className="flex w-[58px] items-center justify-center rounded-sm border border-[#62718a] bg-linear-to-b from-[#f5f3f8] to-[#d9dbe8]">
      <WpsLogo className="h-[23px] w-[34px]" />
    </button>
    <div className="ml-auto flex bg-linear-to-r from-[#a3bedd] to-[#8092ae] to-15% pl-[46px]">
      <div className="flex items-center">
        <Icon className="size-4 text-[#d9dde4]">
          <rect x="1" y="6" width="14" height="6.500" rx="1" fill="#a9afb8" />
          <path d="M3 8h10M3 10.300h10" strokeDasharray="1 1.300" stroke="#555" />
        </Icon>
        <svg viewBox="0 0 16 16" className="ml-1.5 size-4" aria-hidden="true">
          <circle cx="8" cy="8" r="7" fill="#13228f" stroke="#5967b5" />
          <path d="M6 6c0-3 4.500-2.800 4.500-.2C10.500 8 8 7.500 8 9.500M8 11.500v1" stroke="#fff" strokeWidth="1.500" fill="none" />
        </svg>
        <div className="ml-[9px] flex w-2.5 flex-col items-center gap-1 pb-1">
          <Icon className="size-2.5">
            <path d="M2 7h8v6H2zM6 7V3h8v6h-4" strokeWidth="2" />
          </Icon>
          <Icon box="0 0 8 8" className="size-1.5">
            <path d="M4 6L1 2h6z" fill="currentColor" />
          </Icon>
        </div>
        <button type="button" aria-label="显示隐藏的图标" className="ml-[9px]">
          <Icon box="0 0 8 8" className="size-2">
            <path d="M4 2.500L6.500 6h-5z" fill="currentColor" />
          </Icon>
        </button>
        <Icon className="ml-[13px] size-4">
          <path d="M5 4.500h10v8H5z" fill="#4c5a70" />
          <path d="M8 15h5M10.500 12.500V15M1 2v3h3V2zM2.500 5v8H5" strokeWidth="1.300" />
        </Icon>
        <Icon className="ml-[7px] size-4">
          <path d="M1 6h3l4-4v12l-4-4H1z" fill="#fff" />
          <path d="M10.500 5.500c1.500 1.500 1.500 3.500 0 5M12.500 3.500c3 2.500 3 6.500 0 9" />
        </Icon>
      </div>
      <div className="ml-[17px] flex flex-col items-center justify-center text-xs leading-[18px]">
        <span>20:00</span>
        <span>2023/9/24</span>
      </div>
      <button type="button" aria-label="显示桌面" className="ml-[9px] w-3.5 border-l border-[#4a5a74] bg-linear-to-b from-[#8b9cb5] via-[#4a617c] to-[#7b8ba4]" />
    </div>
  </div>
);

const App = () => (
  <div className="flex h-screen flex-col overflow-hidden bg-[#f0eef0] font-['Noto_Sans','Noto_Sans_CJK_SC',sans-serif] text-xs text-[#404040]">
    <TitleBar />
    <MenuBar />
    <Ribbon />
    <div className="flex min-h-0 flex-1">
      <main className="flex min-w-0 flex-1 flex-col">
        <FormulaBar />
        <Sheet />
        <SheetTabs />
      </main>
      <SideBar />
    </div>
    <StatusBar />
    <TaskBar />
  </div>
);

export default App;
